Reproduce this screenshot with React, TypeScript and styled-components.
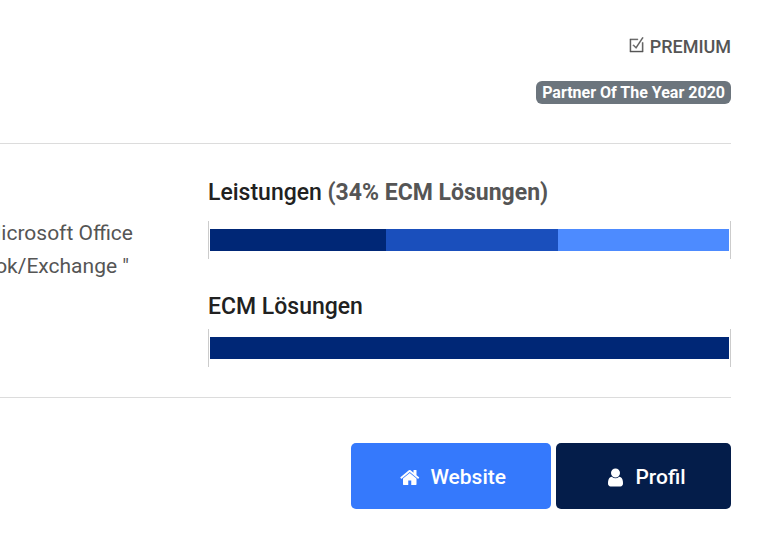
import React from "react";
import styled, { createGlobalStyle } from "styled-components";
import { TfiCheckBox } from "react-icons/tfi";

const GlobalStyle = createGlobalStyle`
  *, *::before, *::after { box-sizing: border-box; }
  body {
    margin: 0;
    background: #fff;
    color: #555;
    font-family: Roboto, "Liberation Sans", sans-serif;
    font-size: 21px;
    line-height: 33px;
  }
`;

const Card = styled.main`
  margin-right: 32px;
  overflow: hidden;
`;

const Header = styled.header`
  display: flex;
  flex-direction: column;
  align-items: flex-end;
  gap: 18px;
  padding: 30px 0 39px;
`;

const Level = styled.div`
  display: flex;
  align-items: center;
  gap: 5px;
  font-size: 18px;
  font-weight: 500;
  svg {
    width: 16px;
    height: 16px;
    margin-bottom: 4px;
    stroke: currentColor;
    stroke-width: 0.5px;
  }
`;

const Badge = styled.span`
  padding: 0 6px;
  border-radius: 6px;
  background: #6c757d;
  color: #fff;
  font-size: 16px;
  font-weight: 700;
  line-height: 23px;
`;

const Body = styled.section`
  display: grid;
  grid-template-columns: 133px 1fr;
  column-gap: 75px;
  padding: 32px 0 30px;
  border: solid #dcdcdc;
  border-width: 1px 0;
`;

const Description = styled.p`
  display: flex;
  flex-direction: column;
  align-items: flex-end;
  margin: 0;
  padding-top: 41px;
  white-space: nowrap;
`;

const Line = styled.span<{ $inset?: boolean }>`
  padding-right: ${(p) => (p.$inset ? "4px" : "0")};
`;

const Charts = styled.div`
  display: flex;
  flex-direction: column;
  gap: 31px;
`;

const Title = styled.h2<{ $compact?: boolean }>`
  margin: 0 0 ${(p) => (p.$compact ? "5px" : "11px")};
  color: #212121;
  font-size: 23px;
  font-weight: 500;
  line-height: 34px;
`;

const Share = styled.span`
  color: #555;
  font-weight: 700;
`;

const Track = styled.div`
  display: flex;
  padding: 8px 1px;
  border: solid #ccc;
  border-width: 0 1px;
`;

const Segment = styled.div<{ $color: string; $share: number }>`
  flex: ${(p) => p.$share} 1 0;
  height: 22px;
  background: ${(p) => p.$color};
`;

const Actions = styled.footer`
  display: flex;
  justify-content: flex-end;
  gap: 5px;
  padding: 45px 0 27px;
`;

const Action = styled.a<{ $dark?: boolean }>`
  display: flex;
  align-items: center;
  justify-content: center;
  gap: 9px;
  min-width: 175px;
  height: 66px;
  padding: 2px 45px 0 49px;
  border-radius: 5px;
  background: ${(p) => (p.$dark ? "#041d4a" : "#3579fc")};
  color: #fff;
  font-weight: 500;
  text-decoration: none;
  svg {
    width: 21px;
    height: 21px;
    fill: currentColor;
  }
`;

const HomeIcon = () => (
  <svg viewBox="0 0 1792 1792" aria-hidden="true">
    <path d="M1408 992v480q0 26-19 45t-45 19h-384v-384h-256v384h-384q-26 0-45-19t-19-45v-480q0-1 .5-3t.5-3l575-474 575 474q1 2 1 6zm223-69l-62 74q-8 9-21 11h-3q-13 0-21-7l-692-577-692 577q-12 8-24 7-13-2-21-11l-62-74q-8-10-7-23.5t11-21.5l719-599q32-26 76-26t76 26l244 204v-195q0-14 9-23t23-9h192q14 0 23 9t9 23v408l219 182q10 8 11 21.5t-7 23.5z" />
  </svg>
);

const UserIcon = () => (
  <svg viewBox="0 0 1792 1792" aria-hidden="true">
    <path d="M1536 1399q0 109-62.5 187t-150.5 78h-854q-88 0-150.5-78t-62.5-187q0-85 8.5-160.5t31.5-152 58.5-131 94-89 134.5-34.5q131 128 313 128t313-128q76 0 134.5 34.5t94 89 58.5 131 31.5 152 8.5 160.5zm-256-887q0 159-112.5 271.5t-271.5 112.5-271.5-112.5-112.5-271.5 112.5-271.5 271.5-112.5 271.5 112.5 112.5 271.5z" />
  </svg>
);

export default function App() {
  return (
    <>
      <GlobalStyle />
      <Card>
        <Header>
          <Level>
            <TfiCheckBox aria-hidden="true" />
            PREMIUM
          </Level>
          <Badge>Partner Of The Year 2020</Badge>
        </Header>
        <Body>
          <Description>
            <Line>Microsoft Office</Line>
            <Line $inset>ok/Exchange "</Line>
          </Description>
          <Charts>
            <div>
              <Title>
                Leistungen <Share>(34% ECM Lösungen)</Share>
              </Title>
              <Track>
                <Segment $color="#002776" $share={34} />
                <Segment $color="#1a4fbc" $share={33} />
                <Segment $color="#4d8bff" $share={33} />
              </Track>
            </div>
            <div>
              <Title $compact>ECM Lösungen</Title>
              <Track>
                <Segment $color="#002776" $share={100} />
              </Track>
            </div>
          </Charts>
        </Body>
        <Actions>
          <Action href="#website">
            <HomeIcon />
            Website
          </Action>
          <Action href="#profil" $dark>
            <UserIcon />
            Profil
          </Action>
        </Actions>
      </Card>
    </>
  );
}
